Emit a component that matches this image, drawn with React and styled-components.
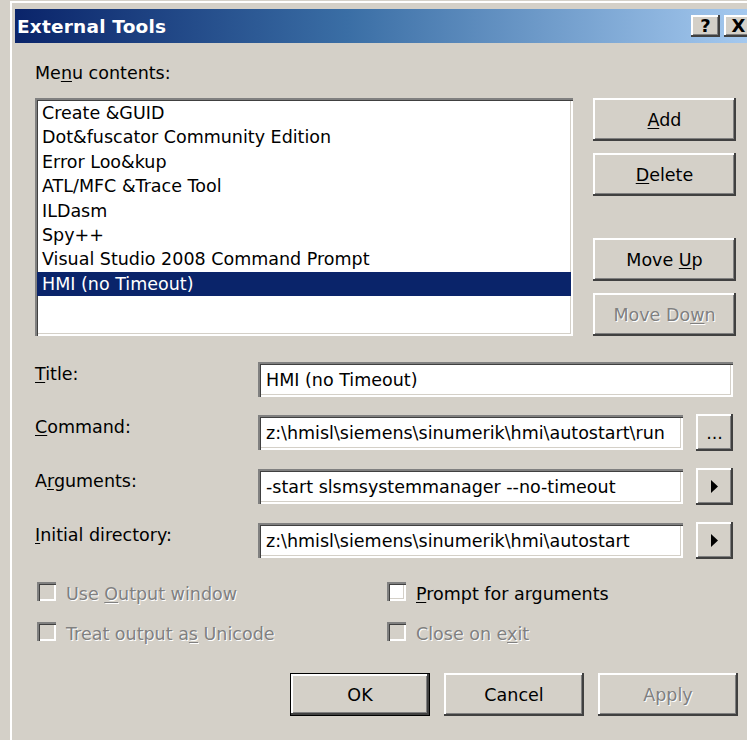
import styled, { createGlobalStyle, css } from "styled-components"

const GlobalStyle = createGlobalStyle`
  html, body {
    margin: 0;
    padding: 0;
  }
  body {
    width: 747px;
    height: 740px;
    overflow: hidden;
    background: #d4d0c8;
    font-family: "DejaVu Sans", Verdana, sans-serif;
    font-size: 17.5px;
    color: #000;
  }
`

// classic 3D edges
const raised = css`
  box-shadow: inset -2px -2px #404040, inset 2px 2px #fff, inset -3px -3px #808080;
`
const sunken = css`
  box-shadow: inset 2px 2px #808080, inset 3px 3px #404040, inset -2px -2px #fff, inset -3px -3px #d4d0c8;
`

const Window = styled.div`
  box-sizing: border-box;
  width: 749px;
  height: 760px;
  margin: 1px 0 0 10px;
  padding: 6px 4px 0 3px;
  background: #d4d0c8;
  border-top: 2px solid #fff;
  border-left: 2px solid #fff;
  border-right: 2px solid #404040;
`

const TitleBar = styled.div`
  display: flex;
  align-items: center;
  justify-content: space-between;
  height: 34px;
  padding: 0 0 0 2px;
  background: linear-gradient(to right, #0a246a 0%, #3a6ea5 45%, #a6caf0 100%);
`

const Caption = styled.span`
  color: #fff;
  font-weight: bold;
  font-size: 18.5px;
  letter-spacing: 0.2px;
`

const CaptionButtons = styled.div`
  display: flex;
  gap: 4px;
`

const CaptionButton = styled.div`
  width: 29px;
  height: 22px;
  display: flex;
  align-items: center;
  justify-content: center;
  background: #d4d0c8;
  font-weight: bold;
  font-size: 18px;
  line-height: 1;
  ${raised}
`

const Client = styled.div`
  width: 703px;
  padding: 18px 0 0 20px;
`

const TopGrid = styled.div`
  display: grid;
  grid-template-columns: 538px 143px;
  column-gap: 20px;
  row-gap: 13px;
`

const Label = styled.div`
  line-height: 24px;
  white-space: nowrap;
  color: ${p => (p.$disabled ? "#808080" : "#000")};
  text-shadow: ${p => (p.$disabled ? "1px 1px 0 #fff" : "none")};
  u {
    text-underline-offset: 2px;
  }
`

const ListBox = styled.div`
  box-sizing: border-box;
  height: 238px;
  padding: 3px 2px;
  background: #fff;
  ${sunken}
`

const ListItem = styled.div`
  height: 24.4px;
  line-height: 24.4px;
  padding-left: 5px;
  white-space: nowrap;
  background: ${p => (p.$selected ? "#0a246a" : "transparent")};
  color: ${p => (p.$selected ? "#fff" : "#000")};
`

const ButtonColumn = styled.div`
  display: flex;
  flex-direction: column;
  gap: 12px;
`

const ButtonFrame = styled.div`
  box-sizing: border-box;
  width: ${p => p.$width || "143px"};
  height: ${p => p.$height || "43px"};
  margin-top: ${p => p.$push || "0"};
  display: flex;
  align-items: center;
  justify-content: center;
  background: #d4d0c8;
  white-space: nowrap;
  color: ${p => (p.$disabled ? "#808080" : "#000")};
  text-shadow: ${p => (p.$disabled ? "1px 1px 0 #fff" : "none")};
  border: ${p => (p.$default ? "1px solid #000" : "none")};
  ${raised}
  u {
    text-underline-offset: 2px;
  }
`

const Button = ({ children, ...rest }) => (
  <ButtonFrame {...rest}>
    <span>{children}</span>
  </ButtonFrame>
)

const Fields = styled.div`
  display: grid;
  grid-template-columns: 210px 425px 37px;
  column-gap: 13px;
  row-gap: 17px;
  align-items: center;
  margin-top: 26px;
`

const FieldLabel = styled(Label)`
  padding-bottom: 11px;
`

const TextBox = styled.div`
  box-sizing: border-box;
  grid-column: ${p => (p.$wide ? "2 / 4" : "auto")};
  height: 35px;
  padding: 0 8px;
  display: flex;
  align-items: center;
  background: #fff;
  white-space: nowrap;
  overflow: hidden;
  ${sunken}
`

const Options = styled.div`
  display: grid;
  grid-template-columns: 350px 1fr;
  row-gap: 16px;
  margin: 23px 0 0 2px;
`

const Option = styled.div`
  display: flex;
  align-items: center;
  gap: 10px;
  height: 24px;
`

const CheckBox = styled.span`
  box-sizing: border-box;
  width: 19px;
  height: 19px;
  flex: none;
  margin-top: -6px;
  background: ${p => (p.$disabled ? "#d4d0c8" : "#fff")};
  ${sunken}
`

const Footer = styled.div`
  display: flex;
  justify-content: flex-end;
  gap: 14px;
  margin-top: 27px;
`

const Arrow = () => (
  <svg width="8" height="13" viewBox="0 0 8 13" style={{ display: "block" }}>
    <polygon points="0,0 7,6.5 0,13" fill="#000" />
  </svg>
)

const tools = [
  "Create &GUID",
  "Dot&fuscator Community Edition",
  "Error Loo&kup",
  "ATL/MFC &Trace Tool",
  "ILDasm",
  "Spy++",
  "Visual Studio 2008 Command Prompt",
  "HMI (no Timeout)",
]

function App() {
  return (
    <>
      <GlobalStyle />
      <Window>
        <TitleBar>
          <Caption>External Tools</Caption>
          <CaptionButtons>
            <CaptionButton>?</CaptionButton>
            <CaptionButton>X</CaptionButton>
          </CaptionButtons>
        </TitleBar>

        <Client>
          <TopGrid>
            <Label>
              Me<u>n</u>u contents:
            </Label>
            <div />
            <ListBox>
              {tools.map((t, i) => (
                <ListItem key={t} $selected={i === tools.length - 1}>
                  {t}
                </ListItem>
              ))}
            </ListBox>
            <ButtonColumn>
              <Button>
                <u>A</u>dd
              </Button>
              <Button>
                <u>D</u>elete
              </Button>
              <Button $push="30px">
                Move <u>U</u>p
              </Button>
              <Button $disabled>
                Move Do<u>w</u>n
              </Button>
            </ButtonColumn>
          </TopGrid>

          <Fields>
            <FieldLabel>
              <u>T</u>itle:
            </FieldLabel>
            <TextBox $wide>HMI (no Timeout)</TextBox>

            <FieldLabel>
              <u>C</u>ommand:
            </FieldLabel>
            <TextBox>z:\hmisl\siemens\sinumerik\hmi\autostart\run</TextBox>
            <Button $width="37px" $height="37px">...</Button>

            <FieldLabel>
              A<u>r</u>guments:
            </FieldLabel>
            <TextBox>-start slsmsystemmanager --no-timeout</TextBox>
            <Button $width="37px" $height="37px">
              <Arrow />
            </Button>

            <FieldLabel>
              <u>I</u>nitial directory:
            </FieldLabel>
            <TextBox>z:\hmisl\siemens\sinumerik\hmi\autostart</TextBox>
            <Button $width="37px" $height="37px">
              <Arrow />
            </Button>
          </Fields>

          <Options>
            <Option>
              <CheckBox $disabled />
              <Label $disabled>
                Use <u>O</u>utput window
              </Label>
            </Option>
            <Option>
              <CheckBox />
              <Label>
                <u>P</u>rompt for arguments
              </Label>
            </Option>
            <Option>
              <CheckBox $disabled />
              <Label $disabled>
                Treat output a<u>s</u> Unicode
              </Label>
            </Option>
            <Option>
              <CheckBox $disabled />
              <Label $disabled>
                Close on e<u>x</u>it
              </Label>
            </Option>
          </Options>

          <Footer>
            <Button $width="140px" $default>
              OK
            </Button>
            <Button $width="140px">Cancel</Button>
            <Button $width="140px" $disabled>
              Apply
            </Button>
          </Footer>
        </Client>
      </Window>
    </>
  )
}

export default App
